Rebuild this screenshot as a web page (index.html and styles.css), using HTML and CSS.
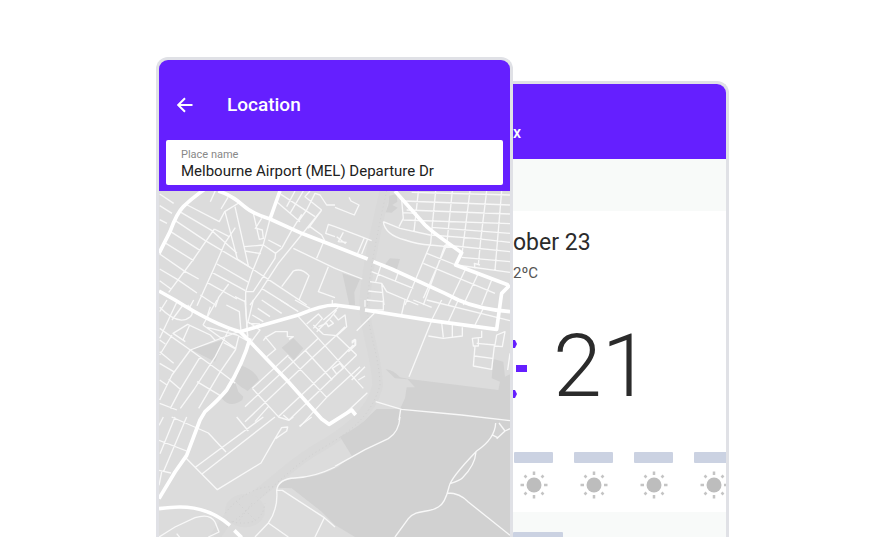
FILE: index.html
```html
<!DOCTYPE html>
<html lang="en">
<head>
<meta charset="utf-8">
<meta name="viewport" content="width=device-width, initial-scale=1">
<title>Location</title>
<link rel="stylesheet" href="styles.css">
</head>
<body>
<main class="stage">
  <section class="phone location">
    <header class="location-header">
      <div class="app-bar">
        <button class="back" type="button" aria-label="Back">
          <svg viewBox="0 0 16 16" width="16" height="16"><path d="M15.500 8H1.500M8 1.200 1.200 8 8 14.800" fill="none" stroke="#fff" stroke-width="2"/></svg>
        </button>
        <h1 class="title">Location</h1>
      </div>
      <div class="field">
        <label for="place">Place name</label>
        <input id="place" type="text" value="Melbourne Airport (MEL) Departure Dr">
      </div>
    </header>
    <svg class="map" viewBox="12 18 1053 1038" role="img" aria-label="Map">
      <rect class="land" x="0" y="0" width="1080" height="1060"/>
      <!-- river corridor -->
      <path class="river" d="M690 18C668 110 635 250 630 340C622 420 665 500 668 600C650 690 560 750 480 795C390 850 330 920 260 960C225 985 205 1020 180 1056"/>
      <ellipse class="river-pool" cx="270" cy="977" rx="60" ry="50"/>
      <!-- parks and the large reserve -->
      <g class="park">
        <path d="M703 32L725 27L727 50L712 60L728 68L710 83L692 82L700 60ZM705 220L735 222L725 255L690 238ZM562 265L615 282L598 322L600 360H583L572 310Z"/>
        <path d="M110 494L205 464L180 530ZM415 459L445 490L417 525L380 488ZM255 540Q300 555 312 585L278 618Q255 605 240 590ZM225 590L200 640Q225 672 262 645L265 635L250 620L240 590Z"/>
        <path d="M692 553Q715 555 735 577L762 582L1030 615L1035 590L1010 580L1015 522L1045 530L1050 575L1065 568V1056H600L540 1020L500 980L410 910L368 908Q380 880 440 878Q495 875 550 845L590 812L555 755Q620 720 640 695L665 672H735L750 640L755 607H780L758 583L720 580Z"/>
      </g>
      <path class="track" d="M695 18C673 115 645 250 638 340C630 425 673 500 675 600C645 710 560 755 485 800C395 855 325 940 210 1030M210 985Q280 900 365 905M230 1010Q320 1030 330 955M245 950L300 1005M290 955L250 1010"/>
      <g class="street">
        <path transform="translate(6 12)" d="M8 15L50 43M8 50L45 73M85 45L187 98L203 68L245 42M72 70L165 125L240 193M55 95L145 155L280 235M8 92L30 103M40 127L130 185M22 160L110 215M8 195L80 245L125 270M8 240L62 272L120 312M8 275L42 300M172 120L110 210L35 310M172 120L215 142M235 116L205 160L170 240L120 350M180 225L275 280M165 250L265 305M150 280L240 330M130 318L175 348M215 285L185 325L175 355M175 5L160 38M213 25L192 60"/>
        <path d="M210 80L247 222L350 290L455 360M240 65L280 242M295 85L313 163L325 160L322 135L305 130M320 100L300 132M345 102L325 178L290 265L272 320V360M268 185L325 180L362 205L380 190L408 140L440 88M270 198L318 206M362 205L360 220L295 320H272M340 165L378 185M500 75L370 235L315 320L285 360M500 75L450 35L465 18M365 50L435 110M378 28L480 95M420 18L395 65M445 18L405 85M540 60H515L495 30L480 25L455 75L430 110M465 125L500 150L508 165L485 220M500 75L460 130M415 190L540 250M520 245L490 320L540 338M380 305L415 258Q440 248 462 272L432 345M320 310L400 360M240 335L270 350M540 125L520 118L512 145L540 155"/>
        <path transform="translate(540 0)" d="M0 67L58 90L72 60L48 48L42 37M0 125L110 167M25 142L10 170L35 172M5 155L32 176M88 158L68 205M98 162L80 207M0 250L82 282M200 45L205 100L192 125M145 110L195 130L285 150L420 160L525 172M145 110Q150 150 210 165Q250 178 285 180L360 187M250 20L237 140M302 18L290 140L287 175L210 360M352 18L335 180L265 340M405 18L382 200M455 18L437 165L430 240M500 18L480 255M230 22L525 30M205 48L525 60M215 75L525 87M205 105L525 116M205 83L245 85M290 127L525 145M330 180L525 200M380 217L525 230M365 240L525 262M275 205L400 255M265 235L480 325M330 180L300 265L265 360M395 245L340 360M430 265L385 360M470 285L440 360M110 260L235 310M140 235L122 290M190 262L180 290M105 290L140 295L155 320L250 360M140 295L147 360M100 318L145 323M95 345L145 350M420 250L418 235L435 240"/>
        <path transform="translate(6 345)" d="M8 22Q65 80 100 50Q115 35 92 15M30 0L8 35M60 5L8 115M80 12L45 60M110 0L98 22M180 0L138 75M150 50L160 20M8 85L100 150L190 215L235 250M85 125L48 100L92 73L160 105L175 122M98 75L78 120M8 120L25 132M45 105L8 165M100 150L45 225L8 300M130 170L70 268L40 325M8 155L50 190M8 190L50 215M35 238L70 268M8 240L30 255M8 310L60 330M100 150L245 95M150 82L240 105L270 122M138 75L235 145M215 90L175 170L110 270L70 325M245 110L235 150L190 215L125 325M200 128L238 148M120 245L195 290M208 15L247 35L252 95M265 0L272 110"/>
        <path transform="translate(270 345)" d="M0 0L8 110M25 0L8 70M8 65L45 90L15 130M12 70L45 72M22 45L55 65M38 25L75 50M50 0L110 40M105 0L160 35M150 0L195 25M262 0V12M55 122L62 112L92 95H127V110H145L132 118M60 110L92 148L65 170M160 50L220 115L355 265M130 170L245 292M180 150L262 240M22 265L100 350M115 345L132 360M22 265L130 165M0 320L145 185L220 115M0 365L200 175L275 105L300 80M30 365L70 320M100 350L255 205L325 135M132 360L335 165M165 380L245 292L345 200M235 103L275 107L335 165M235 103L205 75M185 72L220 42L232 55L205 85M220 80L245 70L250 80L265 70L255 60M215 95L255 55L275 30M280 22L235 60M265 42L280 60M275 107L305 80L300 45L280 60M320 125L330 118V135L318 145M262 205L285 190L295 205L275 222ZM320 240L360 200"/>
        <path transform="translate(540 345)" d="M50 130L62 120V135L40 155M70 240L90 228M97 278L20 350M118 40L65 92M90 0V20M145 0V30L90 28M210 0L200 42M235 0L290 22M290 62L222 230M320 68L325 112M352 75V110M382 82V108L325 115L280 108M320 0L290 60M370 0L340 65M275 0L525 62M445 25L420 75M440 92V112L412 115L415 138H430V115M425 130L480 135L485 105L510 95L502 140L478 138L470 208L415 198L420 138M418 168L472 175M525 160L518 210M122 305L200 328L380 345L525 362M197 328L192 360"/>
        <path transform="translate(0 696)" d="M25 0L12 25M60 0L15 110M95 0L25 165M50 0L160 48L213 105M12 70L95 102M12 160L48 168M20 165L12 205M245 0L280 42M325 0L122 150M360 0L140 172M92 122L187 218L318 138L360 65L380 32L398 30L395 42L362 65M370 0L402 10L415 0M470 0L433 28M12 360L60 330L120 302Q165 288 180 315L192 345L160 360M65 350L75 362M540 150Q480 180 420 183Q370 185 365 220Q370 275 340 318L300 360M365 220H382L508 302L480 360M340 318L400 360M508 302L540 330"/>
        <path transform="translate(540 696)" d="M0 148L90 98L160 65Q192 45 195 0M482 18Q480 65 425 102Q345 185 342 210Q330 260 310 270C280 290 245 275 220 305L180 360M423 105Q420 145 382 183Q375 190 345 200M338 228Q375 228 400 255L525 355M492 18L510 42L525 35M510 42L485 65M470 53L488 62"/>
      </g>
      <g class="road">
        <path d="M150 12Q110 40 85 65Q65 85 45 140L12 205M190 18Q230 30 265 62Q290 85 345 102L440 145L638 222M655 230L710 252L870 325L910 345Q970 372 1065 380M375 18L345 102"/>
        <path d="M12 318L60 345Q180 420 255 440L285 470L400 590L500 702L522 718L590 675L602 690M255 440L430 390Q500 360 540 360L615 370M630 375L830 407L1025 433L1037 345L1040 325L1065 300M720 18L810 120Q830 140 920 203L902 240L1060 300"/>
        <path d="M285 460Q265 535 215 615Q190 645 150 680L135 705L95 811L60 861L12 941M12 971Q50 966 75 966Q160 966 225 1021M238 1036L260 1058"/>
      </g>
    </svg>
  </section>

  <section class="phone weather">
    <header class="weather-header">x</header>
    <div class="band"></div>
    <div class="today">
      <h2 class="date">ober 23</h2>
      <p class="low">2ºC</p>
      <div class="now">
        <svg class="rays" viewBox="0 0 16 60" width="16" height="60" aria-hidden="true"><path d="M0 1H2L4 5L2 9H0ZM3 26H14V33H3ZM0 51H2L4 55L2 59H0Z" fill="#651fff"/></svg>
        <span class="degrees">21</span>
      </div>
    </div>
    <svg class="defs" width="0" height="0" aria-hidden="true">
      <symbol id="sun" viewBox="-14 -14 28 28">
        <circle r="7.500" fill="#bdbdbd"/>
        <path d="M0-13.500V-10M0 13.500V10M-13.500 0H-10M13.500 0H10M-9.500-9.500-7.500-7.500M9.500 9.500 7.500 7.500M-9.500 9.500-7.500 7.500M9.500-9.500 7.500-7.500" stroke="#c4c4c4" stroke-width="2.500"/>
      </symbol>
    </svg>
    <ul class="hours">
      <li><span class="bar"></span><svg class="sun"><use href="#sun"/></svg></li>
      <li><span class="bar"></span><svg class="sun"><use href="#sun"/></svg></li>
      <li><span class="bar"></span><svg class="sun"><use href="#sun"/></svg></li>
      <li><span class="bar"></span><svg class="sun"><use href="#sun"/></svg></li>
    </ul>
    <div class="more"><span class="bar wide"></span></div>
  </section>
</main>
</body>
</html>
```

FILE: styles.css
```css
* { box-sizing: border-box; }

body {
  margin: 0;
  background: #fff;
  color: #2b2b2b;
  font-family: Roboto, "Liberation Sans", sans-serif;
}

h1, h2, p, ul { margin: 0; padding: 0; }

.stage {
  display: flex;
  justify-content: center;
  height: 100vh;
  padding-top: 57px;
  overflow: hidden;
}

.phone {
  border: 3px solid #e0e1e6;
  border-bottom: 0;
  overflow: hidden;
}

/* Location screen */
.location {
  flex: 0 1 357px;
  border-radius: 12px 12px 0 0;
  background: #dcdcdc;
}

.location-header {
  padding: 33px 7px 6px;
  background: #651fff;
}

.app-bar {
  display: flex;
  align-items: center;
  gap: 34px;
  height: 24px;
  margin-bottom: 23px;
  padding-left: 11px;
  color: #fff;
}

.back {
  display: flex;
  padding: 0;
  border: 0;
  background: none;
}

.title {
  font-size: 19px;
  line-height: 24px;
  font-weight: 500;
}

.field {
  display: flex;
  flex-direction: column;
  height: 45px;
  padding: 8px 15px 4px;
  border-radius: 2px;
  background: #fff;
}

.field label {
  color: #888;
  font-size: 11px;
  line-height: 13px;
}

.field input {
  width: 100%;
  height: 20px;
  padding: 0;
  border: 0;
  outline: 0;
  background: none;
  color: #212121;
  font: 15px/20px Roboto, "Liberation Sans", sans-serif;
}

.map {
  display: block;
  width: 100%;
}

.map path { stroke-linejoin: round; }
.land { fill: #dcdcdc; }
.park { fill: #d1d1d1; }
.river { fill: none; stroke: #d9d9d9; stroke-width: 32; }
.river-pool { fill: #d9d9d9; }
.track { fill: none; stroke: #d0d0d0; stroke-width: 3; stroke-dasharray: 3 9; }
.street { fill: none; stroke: #f8f8f8; stroke-width: 4; }
.road { fill: none; stroke: #fff; stroke-width: 11; }

/* Weather screen */
.weather {
  flex: 0 1 216px;
  margin-top: 24px;
  border-left: 0;
  border-radius: 0 12px 0 0;
}

.weather-header {
  height: 75px;
  padding-top: 39px;
  background: #651fff;
  color: #fff;
  font-size: 16px;
  line-height: 20px;
  font-weight: 500;
}

.band {
  height: 52px;
  background: #f8faf9;
}

.today { padding-top: 20px; }

.date {
  font-size: 23px;
  line-height: 24px;
  font-weight: 400;
}

.low {
  margin-top: 8px;
  color: #555;
  font-size: 15px;
  line-height: 20px;
}

.now {
  display: flex;
  align-items: center;
  gap: 24px;
  height: 120px;
  margin-top: 26px;
}

.degrees {
  padding-bottom: 6px;
  font-size: 88px;
  line-height: 114px;
  font-weight: 300;
}

.defs { display: block; }

.hours {
  display: flex;
  margin-top: 23px;
  padding: 0 0 13px 1px;
  list-style: none;
}

.hours li {
  display: flex;
  flex: 0 0 60px;
  flex-direction: column;
  gap: 8px;
}

.bar {
  width: 39px;
  height: 11px;
  border-radius: 1px;
  background: #cbd2e2;
}

.sun {
  width: 28px;
  height: 28px;
  margin-left: 6px;
}

.more {
  height: 100px;
  padding-top: 20px;
  background: #f8faf9;
}

.wide {
  display: block;
  width: 50px;
}
```
